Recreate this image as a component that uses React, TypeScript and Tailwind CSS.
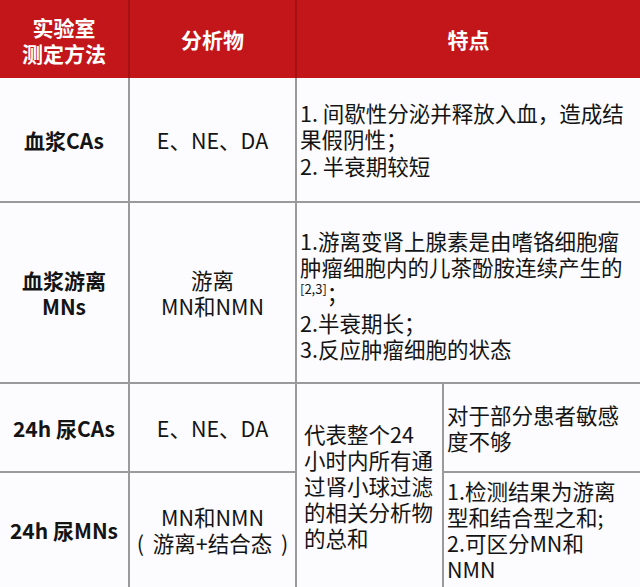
import React from "react";

const font = { fontFamily: '"Noto Sans CJK SC", "Noto Sans", sans-serif' };

export default function App() {
  const td = "border-2 border-[#9a9a9a] align-middle";
  const th = "bg-[#c2161b] text-white font-bold text-[21px] leading-[26px] text-center align-middle border-x-2 border-[#a51015]";
  return (
    <div className="w-[640px] h-[587px] overflow-hidden bg-[#fcfcfe] text-[#141414]" style={font}>
      <table className="table-fixed border-collapse w-[640px] border-hidden">
        <colgroup>
          <col className="w-[129px]" />
          <col className="w-[167px]" />
          <col className="w-[147px]" />
          <col className="w-[197px]" />
        </colgroup>
        <thead>
          <tr className="h-[78px]">
            <th className={th}>
              <div className="pt-[2px]">
                实验室
                <br />
                测定方法
              </div>
            </th>
            <th className={th}>分析物</th>
            <th className={th} colSpan={2}>
              特点
            </th>
          </tr>
        </thead>
        <tbody className="text-[21.5px] leading-[26px]">
          <tr className="h-[124px]">
            <td className={`${td} text-center font-bold text-[21px] border-t-0`}>血浆CAs</td>
            <td className={`${td} text-center border-t-0`}>E、NE、DA</td>
            <td className={`${td} pl-[3px] whitespace-nowrap border-t-0`} colSpan={2}>
              <div className="leading-[26.5px]">
                1. 间歇性分泌并释放入血，造成结
                <br />
                果假阴性；
                <br />
                2. 半衰期较短
              </div>
            </td>
          </tr>
          <tr className="h-[181px]">
            <td className={`${td} text-center font-bold text-[21px]`}>
              血浆游离
              <br />
              MNs
            </td>
            <td className={`${td} text-center`}>
              游离
              <br />
              MN和NMN
            </td>
            <td className={`${td} pl-[3px] whitespace-nowrap`} colSpan={2}>
              <div className="pt-[4px]">
                1.游离变肾上腺素是由嗜铬细胞瘤
                <br />
                肿瘤细胞内的儿茶酚胺连续产生的
                <br />
                <span className="text-[13px] relative top-[-8px]">[2,3]</span>
                ；
                <br />
                2.半衰期长；
                <br />
                3.反应肿瘤细胞的状态
              </div>
            </td>
          </tr>
          <tr className="h-[89px]">
            <td className={`${td} text-center font-bold text-[21px] whitespace-nowrap`}>24h 尿CAs</td>
            <td className={`${td} text-center`}>E、NE、DA</td>
            <td className={`${td} pl-[7px] whitespace-nowrap`} rowSpan={2}>
              代表整个24
              <br />
              小时内所有通
              <br />
              过肾小球过滤
              <br />
              的相关分析物
              <br />
              的总和
            </td>
            <td className={`${td} pl-[3px] whitespace-nowrap`}>
              对于部分患者敏感
              <br />
              度不够
            </td>
          </tr>
          <tr className="h-[115px]">
            <td className={`${td} text-center font-bold text-[21px] whitespace-nowrap`}>24h 尿MNs</td>
            <td className={`${td} text-center whitespace-nowrap`}>
              MN和NMN
              <br />
              <span className="inline-flex items-center justify-center">
                <span className="inline-block w-[16px] text-left">(</span>
                <span>游离+结合态</span>
                <span className="inline-block w-[16px] text-right">)</span>
              </span>
            </td>
            <td className={`${td} pl-[3px] whitespace-nowrap`}>
              1.检测结果为游离
              <br />
              型和结合型之和;
              <br />
              2.可区分MN和
              <br />
              NMN
            </td>
          </tr>
        </tbody>
      </table>
    </div>
  );
}
